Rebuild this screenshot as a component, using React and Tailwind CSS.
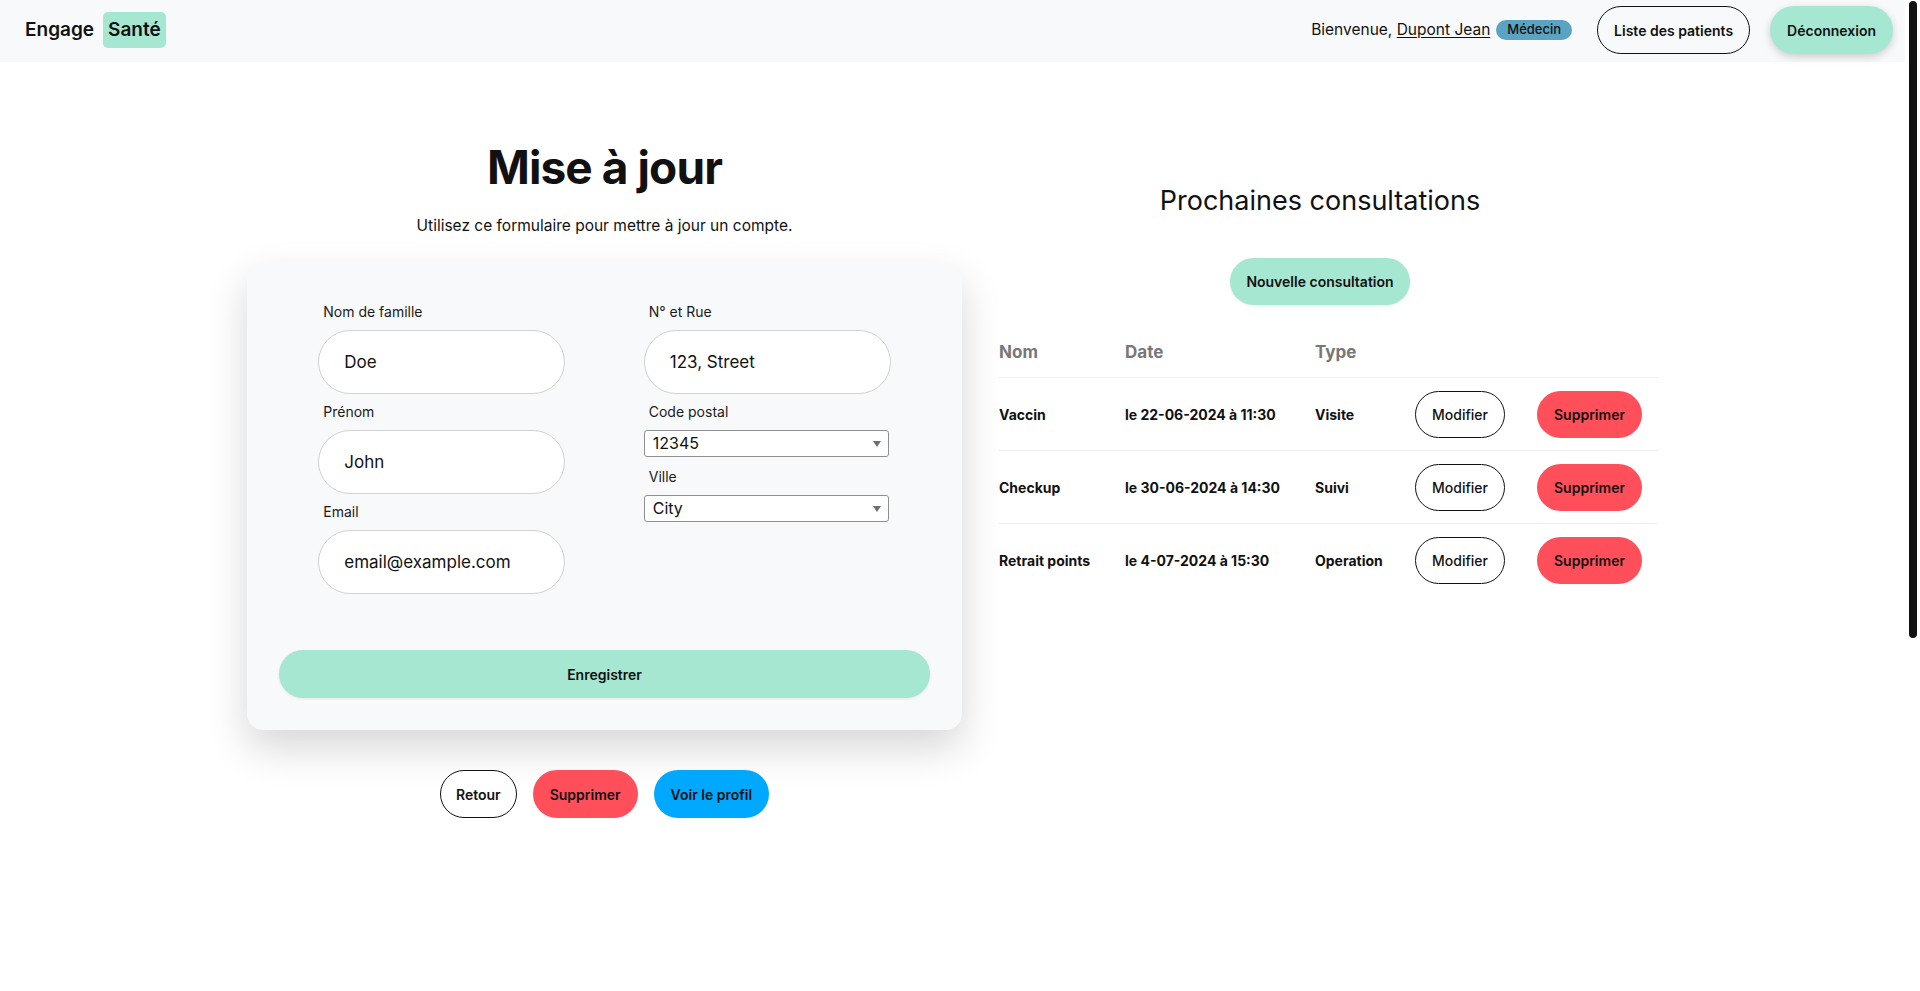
import React from "react";

function Field({ label, value }) {
  return (
    <div className="flex flex-col">
      <label className="text-[14px] leading-5 text-[#1a1a1a] pl-[5px] mb-2">{label}</label>
      <input
        defaultValue={value}
        className="h-16 w-[247px] rounded-full border border-[#d2d2d2] bg-white pl-[25px] pr-4 text-[17px] text-[#111] outline-none mb-2"
      />
    </div>
  );
}

function SelectField({ label, value }) {
  return (
    <div className="flex flex-col">
      <label className="text-[14px] leading-5 text-[#1a1a1a] pl-[5px] mb-2">{label}</label>
      <div className="relative w-[245px] mb-[10px]">
        <select
          defaultValue={value}
          className="appearance-none h-[27px] w-full rounded-[3px] border border-[#8f8f8f] bg-white pl-[8px] text-[16px] leading-[25px] text-[#111] outline-none"
        >
          <option>{value}</option>
        </select>
        <svg className="pointer-events-none absolute right-[8px] top-[11px]" width="8" height="6" viewBox="0 0 8 6">
          <path d="M0 0 L8 0 L4 6 Z" fill="#6f6f6f" />
        </svg>
      </div>
    </div>
  );
}

const rows = [
  { nom: "Vaccin", date: "le 22-06-2024 à 11:30", type: "Visite" },
  { nom: "Checkup", date: "le 30-06-2024 à 14:30", type: "Suivi" },
  { nom: "Retrait points", date: "le 4-07-2024 à 15:30", type: "Operation" },
];

export default function App() {
  return (
    <div className="h-screen overflow-hidden flex bg-white font-['Inter','Noto_Sans',sans-serif] text-[#1a1a1a]">
      <div className="flex-1 min-w-0">
        {/* Header */}
        <header className="h-[62px] bg-[#f8f9fa] flex items-center justify-between pl-[25px] pr-[12px] pb-[2px]">
          <div className="flex items-center gap-[9px]">
            <span className="text-[19px] font-semibold text-[#111]">Engage</span>
            <span className="h-9 px-[5px] flex items-center rounded-[5px] bg-[#a6e7d1] text-[19px] font-semibold text-[#111]">Santé</span>
          </div>
          <div className="flex items-center">
            <span className="text-[15.5px] text-[#111]">
              Bienvenue, <span className="underline underline-offset-2">Dupont Jean</span>
            </span>
            <span className="ml-[6px] h-5 px-[11px] flex items-center rounded-full bg-[#5ba3c2] text-[13px] font-medium text-[#111]">Médecin</span>
            <button className="ml-[25px] h-12 px-[16px] rounded-full border border-[#111] bg-transparent text-[14px] font-semibold text-[#111]">Liste des patients</button>
            <button className="ml-5 h-12 px-[17px] rounded-full bg-[#a6e7d1] text-[14px] font-semibold text-[#111] shadow-[0_3px_8px_rgba(0,0,0,0.18)]">Déconnexion</button>
          </div>
        </header>

        {/* Main */}
        <main className="flex justify-center gap-[37px] pt-[76px]">
          {/* Left column */}
          <section className="w-[715px] flex flex-col items-center">
            <h1 className="text-[46px] leading-[58px] font-bold text-[#111] tracking-[-0.02em]">Mise à jour</h1>
            <p className="mt-[18px] text-[15.5px] leading-6 text-[#111]">Utilisez ce formulaire pour mettre à jour un compte.</p>

            <div className="mt-6 w-full rounded-2xl bg-[#f8f9fa] pt-10 px-8 pb-8 shadow-[0_18px_40px_rgba(0,0,0,0.16)]">
              <div className="grid grid-cols-2">
                <div className="flex flex-col items-center">
                  <Field label="Nom de famille" value="Doe" />
                  <Field label="Prénom" value="John" />
                  <Field label="Email" value="email@example.com" />
                </div>
                <div className="flex flex-col items-center">
                  <div className="w-[247px]">
                    <Field label="N° et Rue" value="123, Street" />
                    <SelectField label="Code postal" value="12345" />
                    <SelectField label="Ville" value="City" />
                  </div>
                </div>
              </div>
              <button className="mt-12 w-full h-12 rounded-full bg-[#a6e7d1] text-[14px] font-semibold text-[#111] shadow-[0_1px_3px_rgba(0,0,0,0.08)]">Enregistrer</button>
            </div>

            <div className="mt-10 flex items-center gap-4">
              <button className="h-12 px-[15px] rounded-full border border-[#111] bg-white text-[14px] font-semibold text-[#111]">Retour</button>
              <button className="h-12 px-[17px] rounded-full bg-[#ff4f5a] text-[14px] font-semibold text-[#111]">Supprimer</button>
              <button className="h-12 px-[17px] rounded-full bg-[#00a8ff] text-[14px] font-semibold text-[#111]">Voir le profil</button>
            </div>
          </section>

          {/* Right column */}
          <section className="w-[659px] pt-[46px]">
            <div className="flex flex-col items-center pr-[17px]">
              <h2 className="text-[27px] leading-[34px] font-normal text-[#111]">Prochaines consultations</h2>
              <button className="mt-10 h-[47px] px-[16px] rounded-full bg-[#a6e7d1] text-[14px] font-semibold text-[#111] shadow-[0_1px_3px_rgba(0,0,0,0.08)]">Nouvelle consultation</button>
            </div>

            <div className="mt-[23px]">
              <div className="grid grid-cols-[126px_190px_100px_122px_121px] items-center h-[50px] border-b border-[#efefef] text-[17px] font-bold text-[#777]">
                <span>Nom</span>
                <span>Date</span>
                <span>Type</span>
                <span></span>
                <span></span>
              </div>
              {rows.map((r, i) => (
                <div
                  key={r.nom}
                  className={
                    "grid grid-cols-[126px_190px_100px_122px_121px] items-center h-[73px] text-[14px] font-bold text-[#111] " +
                    (i < rows.length - 1 ? "border-b border-[#efefef]" : "")
                  }
                >
                  <span>{r.nom}</span>
                  <span>{r.date}</span>
                  <span>{r.type}</span>
                  <span>
                    <button className="h-[47px] w-[90px] rounded-full border border-[#111] bg-white text-[14px] font-medium text-[#111]">Modifier</button>
                  </span>
                  <span>
                    <button className="h-[47px] w-[105px] rounded-full bg-[#ff4f5a] text-[14px] font-semibold text-[#111]">Supprimer</button>
                  </span>
                </div>
              ))}
            </div>
          </section>
        </main>
      </div>

      {/* Scrollbar */}
      <div className="w-[15px] shrink-0 bg-white pt-px pl-[4px]">
        <div className="h-[637px] w-[8px] rounded-full bg-[#111]" />
      </div>
    </div>
  );
}
